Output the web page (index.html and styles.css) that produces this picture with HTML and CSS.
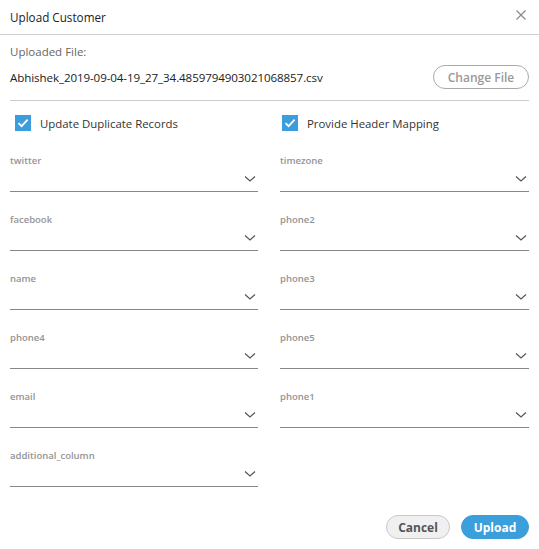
FILE: index.html
```html
<!DOCTYPE html>
<html>
<head>
<meta charset="utf-8">
<link rel="stylesheet" href="styles.css">
</head>
<body>
<div class="dialog">
  <div class="header">
    <span class="title">Upload Customer</span>
    <svg class="close" width="10" height="10" viewBox="0 0 10 10"><path d="M0.5 0.5L9.5 9.5M9.5 0.5L0.5 9.5" stroke="#8a8a8a" stroke-width="1.2" fill="none"/></svg>
  </div>
  <div class="body">
    <div class="file-section">
      <div class="file-label">Uploaded File:</div>
      <div class="file-row">
        <span class="file-name">Abhishek_2019-09-04-19_27_34.4859794903021068857.csv</span>
        <button class="btn-outline">Change File</button>
      </div>
    </div>
    <div class="checks">
      <label class="check"><span class="box"><svg width="16" height="16" viewBox="0 0 16 16"><path d="M3.5 8.2L6.6 11.2L12.6 4.6" stroke="#fff" stroke-width="1.8" fill="none"/></svg></span>Update Duplicate Records</label>
      <label class="check"><span class="box"><svg width="16" height="16" viewBox="0 0 16 16"><path d="M3.5 8.2L6.6 11.2L12.6 4.6" stroke="#fff" stroke-width="1.8" fill="none"/></svg></span>Provide Header Mapping</label>
    </div>
    <div class="fields">
      <div class="field"><div class="flabel">twitter</div><div class="select"><svg width="12" height="8" viewBox="0 0 12 8"><path d="M1 1.5L6 6L11 1.5" stroke="#555" stroke-width="1.2" fill="none"/></svg></div></div>
      <div class="field"><div class="flabel">timezone</div><div class="select"><svg width="12" height="8" viewBox="0 0 12 8"><path d="M1 1.5L6 6L11 1.5" stroke="#555" stroke-width="1.2" fill="none"/></svg></div></div>
      <div class="field"><div class="flabel">facebook</div><div class="select"><svg width="12" height="8" viewBox="0 0 12 8"><path d="M1 1.5L6 6L11 1.5" stroke="#555" stroke-width="1.2" fill="none"/></svg></div></div>
      <div class="field"><div class="flabel">phone2</div><div class="select"><svg width="12" height="8" viewBox="0 0 12 8"><path d="M1 1.5L6 6L11 1.5" stroke="#555" stroke-width="1.2" fill="none"/></svg></div></div>
      <div class="field"><div class="flabel">name</div><div class="select"><svg width="12" height="8" viewBox="0 0 12 8"><path d="M1 1.5L6 6L11 1.5" stroke="#555" stroke-width="1.2" fill="none"/></svg></div></div>
      <div class="field"><div class="flabel">phone3</div><div class="select"><svg width="12" height="8" viewBox="0 0 12 8"><path d="M1 1.5L6 6L11 1.5" stroke="#555" stroke-width="1.2" fill="none"/></svg></div></div>
      <div class="field"><div class="flabel">phone4</div><div class="select"><svg width="12" height="8" viewBox="0 0 12 8"><path d="M1 1.5L6 6L11 1.5" stroke="#555" stroke-width="1.2" fill="none"/></svg></div></div>
      <div class="field"><div class="flabel">phone5</div><div class="select"><svg width="12" height="8" viewBox="0 0 12 8"><path d="M1 1.5L6 6L11 1.5" stroke="#555" stroke-width="1.2" fill="none"/></svg></div></div>
      <div class="field"><div class="flabel">email</div><div class="select"><svg width="12" height="8" viewBox="0 0 12 8"><path d="M1 1.5L6 6L11 1.5" stroke="#555" stroke-width="1.2" fill="none"/></svg></div></div>
      <div class="field"><div class="flabel">phone1</div><div class="select"><svg width="12" height="8" viewBox="0 0 12 8"><path d="M1 1.5L6 6L11 1.5" stroke="#555" stroke-width="1.2" fill="none"/></svg></div></div>
      <div class="field"><div class="flabel">additional_column</div><div class="select"><svg width="12" height="8" viewBox="0 0 12 8"><path d="M1 1.5L6 6L11 1.5" stroke="#555" stroke-width="1.2" fill="none"/></svg></div></div>
    </div>
    <div class="footer">
      <button class="btn-cancel">Cancel</button>
      <button class="btn-primary">Upload</button>
    </div>
  </div>
</div>
</body>
</html>
```
FILE: styles.css
```css
* { box-sizing: border-box; }
html, body { margin: 0; padding: 0; background: #fff; }
body { font-family: "Open Sans", "Noto Sans", sans-serif; color: #222; }
.dialog { width: 539px; height: 549px; background: #fff; }
.header {
  height: 35px;
  border-bottom: 1px solid #d0d0d0;
  display: flex;
  align-items: center;
  justify-content: space-between;
  padding: 0 13px 0 10px;
}
.title { font-size: 11.7px; color: #222; }
.close { display: block; margin-top: -4px; }
.body { padding: 0 10px; }
.file-section { border-bottom: 1px solid #ccc; padding-top: 9px; height: 66px; }
.file-label { font-size: 11.5px; color: #666; line-height: 16px; }
.file-row { display: flex; justify-content: space-between; align-items: center; margin-top: 5px; }
.file-name { font-size: 11.6px; color: #222; letter-spacing: -0.1px; }
.btn-outline {
  font-family: inherit;
  width: 96px; height: 24px;
  border: 1px solid #aaa; border-radius: 12px;
  background: #fff; color: #999;
  font-size: 12px; font-weight: 600;
  padding: 0;
}
.checks { display: grid; grid-template-columns: 1fr 1fr; column-gap: 20px; padding: 14px 0 0 5px; }
.check { display: flex; align-items: center; font-size: 11.4px; color: #333; gap: 9px; }
.box { width: 16px; height: 16px; background: #3c9ddc; display: block; }
.box svg { display: block; }
.fields { display: grid; grid-template-columns: 248px 249px; column-gap: 22px; row-gap: 0; margin-top: 24px; }
.field { height: 59px; }
.flabel { font-size: 9.5px; font-weight: 600; color: #949494; line-height: 12px; }
.select {
  height: 25px;
  border-bottom: 1px solid #888;
  display: flex; justify-content: flex-end; align-items: flex-start;
  padding-right: 2px; padding-top: 8px;
}
.select svg { display: block; }
.footer { display: flex; justify-content: flex-end; gap: 11px; margin-top: 6px; }
.btn-cancel, .btn-primary {
  font-family: inherit; font-size: 12px; font-weight: 700; height: 24px; border-radius: 12px; padding: 0;
}
.btn-cancel { width: 64px; background: #f0f0f0; border: 1px solid #c8c8c8; color: #555; }
.btn-primary { width: 68px; background: #3b9fdc; border: 1px solid #3b9fdc; color: #fff; }
```
